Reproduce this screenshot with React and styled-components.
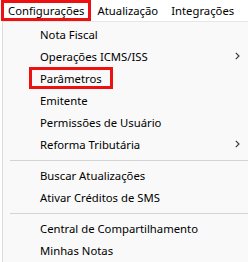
import React from 'react'
import styled, {createGlobalStyle} from 'styled-components'

const GlobalStyle = createGlobalStyle`
    html, body {
        margin: 0;
        padding: 0;
        background: #ffffff;
        overflow: hidden;
    }
    body {
        font-family: "Noto Sans", "Open Sans", "DejaVu Sans", sans-serif;
        font-size: 11.3px;
        color: #000000;
    }
`

const topMenus = [
    {label: 'Configurações', marked: true},
    {label: 'Atualização'},
    {label: 'Integrações'},
]

const groups = [
    [
        {label: 'Nota Fiscal'},
        {label: 'Operações ICMS/ISS', sub: true},
        {label: 'Parâmetros', marked: true},
        {label: 'Emitente'},
        {label: 'Permissões de Usuário'},
        {label: 'Reforma Tributária', sub: true},
    ],
    [
        {label: 'Buscar Atualizações'},
        {label: 'Ativar Créditos de SMS'},
    ],
    [
        {label: 'Central de Compartilhamento'},
        {label: 'Minhas Notas'},
    ],
]

function Chevron() {
    return (
        <svg width="5" height="8" viewBox="0 0 5 8">
            <polyline points="0.8,0.8 4,4 0.8,7.2" fill="none" stroke="#333" strokeWidth="1.1" />
        </svg>
    )
}

export default function App() {
    return (
        <Screen>
            <GlobalStyle />
            <MenuBar>
                {topMenus.map(m => (
                    <TopItem key={m.label} marked={m.marked}>{m.label}</TopItem>
                ))}
            </MenuBar>
            <Dropdown>
                {groups.map((group, gi) => (
                    <React.Fragment key={gi}>
                        {gi > 0 && <Separator />}
                        {group.map(item => (
                            <Row key={item.label}>
                                <Label marked={item.marked}>{item.label}</Label>
                                {item.sub && <Arrow><Chevron /></Arrow>}
                            </Row>
                        ))}
                    </React.Fragment>
                ))}
            </Dropdown>
        </Screen>
    )
}

const Screen = styled.div`
    width: 248px;
    height: 262px;
    display: flex;
    flex-direction: column;
    background: #ffffff;
`
const MenuBar = styled.div`
    display: flex;
    height: 21px;
    padding-left: 1px;
    background: #ffffff;
`
const TopItem = styled.div`
    display: flex;
    align-items: center;
    height: 21px;
    box-sizing: border-box;
    padding: 0 3px 0 4px;
    border: 3px solid ${props => props.marked ? '#ee1111' : 'transparent'};
    white-space: nowrap;
`
const Dropdown = styled.div`
    flex: 1;
    margin-left: 2px;
    padding-top: 1px;
    background: #f9f9f9;
    border-top: 1px solid #e6e6e6;
    border-left: 1px solid #dcdcdc;
    display: flex;
    flex-direction: column;
`
const Row = styled.div`
    display: flex;
    align-items: center;
    height: 22px;
    padding-left: 26px;
    padding-right: 8px;
`
const Label = styled.span`
    display: flex;
    align-items: center;
    height: 22px;
    box-sizing: border-box;
    padding: 0 8px;
    border: 3px solid ${props => props.marked ? '#ee1111' : 'transparent'};
    white-space: nowrap;
`
const Arrow = styled.span`
    margin-left: auto;
    display: flex;
    align-items: center;
`
const Separator = styled.div`
    height: 1px;
    background: #d4d4d4;
    margin: 5px 0 3px 7px;
`
